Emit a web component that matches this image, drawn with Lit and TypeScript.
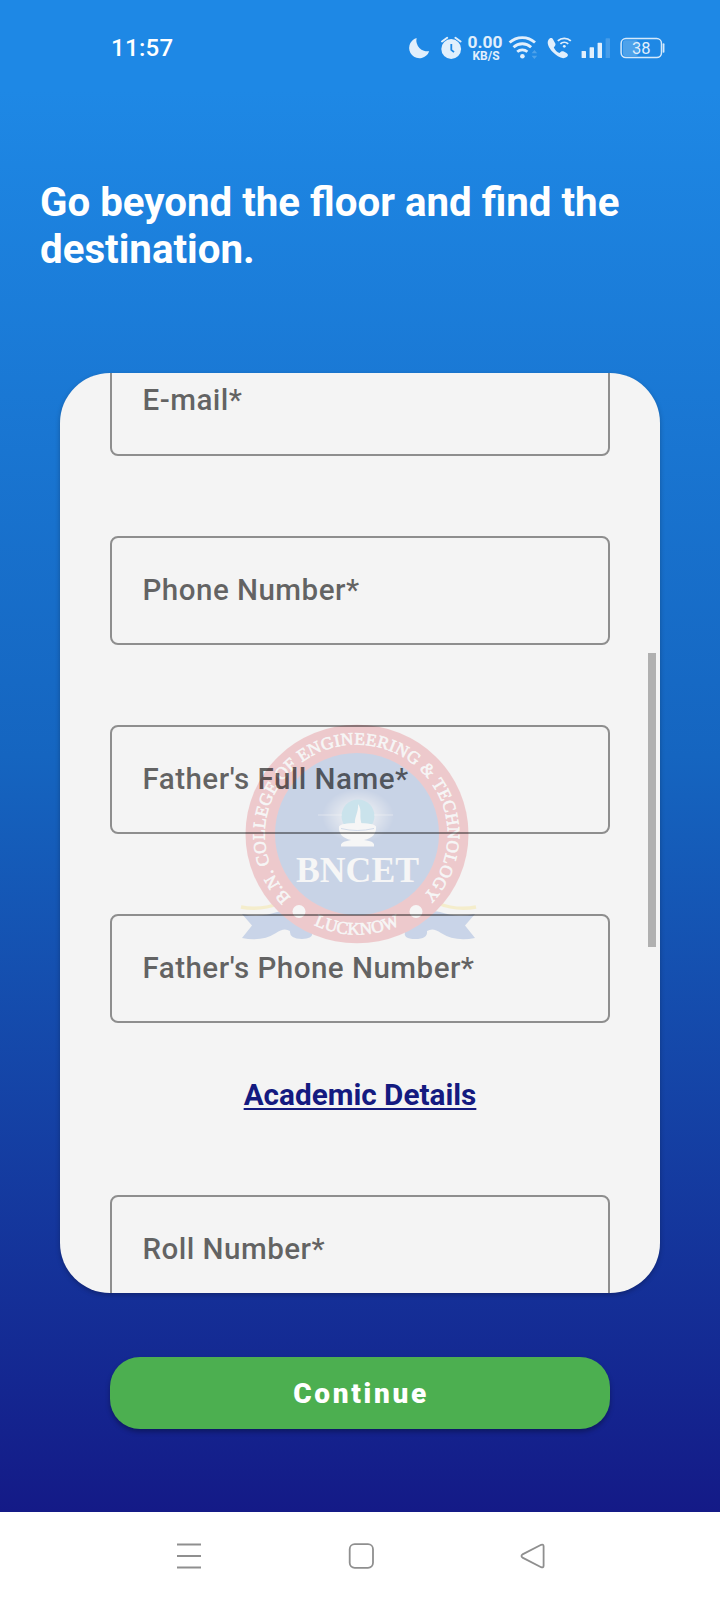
import { LitElement, html, css, svg } from "lit";
import { customElement, property } from "lit/decorators.js";

@customElement("status-bar")
class StatusBar extends LitElement {
  static styles = css`
    :host {
      display: flex;
      height: 96px;
      padding: 0 54px 0 111px;
      box-sizing: border-box;
      align-items: center;
      justify-content: space-between;
      color: #fff;
    }
    .time {
      font: 500 24px Roboto, sans-serif;
      letter-spacing: 0.3px;
    }
    .icons {
      display: block;
      width: 300px;
      height: 60px;
      margin: 4px -24px 0 0;
    }
    .rate { font: 700 16.5px Roboto, sans-serif; }
    .unit { font: 700 12.4px Roboto, sans-serif; }
    .charge { font: 400 16px Roboto, sans-serif; }
  `;
  render() {
    return html`
      <span class="time">11:57</span>
      <svg class="icons" viewBox="0 0 300 60" fill="#e1effc">
        <path d="M26.6 18A10.3 10.3 0 1 0 39.2 31.2A11 11 0 0 1 26.6 18Z" />
        <circle cx="61.2" cy="29" r="9.9" />
        <path d="M52 21.5L57.2 17.8M70.6 21.5L65.4 17.8" stroke="#e1effc" stroke-width="2" stroke-linecap="round" />
        <path d="M61.3 24V29.8L64 32.2" fill="none" stroke="#1e88e5" stroke-width="1.8" />
        <text class="rate" x="77.6" y="28" textLength="35" lengthAdjust="spacingAndGlyphs">0.00</text>
        <text class="unit" x="82.5" y="39.9" textLength="27" lengthAdjust="spacingAndGlyphs">KB/S</text>
        <g fill="none" stroke="#e1effc" stroke-width="2.8">
          <path d="M119.6 22.6a18.5 18.5 0 0 1 25.4 0" />
          <path d="M123.5 27.2a13 13 0 0 1 17.6 0" />
          <path d="M127.2 31.8a7.8 7.8 0 0 1 10.2 0" />
        </g>
        <circle cx="132.4" cy="36.3" r="2.3" />
        <path d="M141.6 33.2l2.8-3.2 2.8 3.2zM141.6 35.8l2.8 3.2 2.8-3.2z" opacity="0.25" />
        <path d="M158.4 20.8c1.5-2.4 3.6-2.5 4.7-0.4l2.2 3.9c0.7 1.5-0.4 2.8-1.5 3.9 1.2 2.6 3.2 4.5 5.8 5.7 1.2-1.6 2.5-2.3 4.2-1.5l2.7 1.4c1.9 1.1 1.9 2.7 0.2 4-3.9 3-9.6-0.3-14-4.9-4-4.3-6.2-9-4.3-12.1z" transform="translate(0 -0.8)" />
        <g fill="none" stroke="#e1effc" stroke-width="1.8">
          <path d="M167.8 20.9a9.4 9.4 0 0 1 13 0" />
          <path d="M170.4 23.9a5.8 5.8 0 0 1 7.8 0" />
        </g>
        <circle cx="174.3" cy="26.3" r="1.4" />
        <rect x="191.6" y="31" width="4.4" height="7" rx="0.6" />
        <rect x="199.6" y="27.3" width="4.4" height="10.7" rx="0.6" />
        <rect x="207.6" y="22.8" width="4.4" height="15.2" rx="0.6" />
        <rect x="215.6" y="18.3" width="4.4" height="19.7" rx="0.6" opacity="0.2" />
        <rect x="233" y="20.3" width="15" height="15.6" rx="2" opacity="0.25" />
        <rect x="231.1" y="18.6" width="40.4" height="19" rx="4.8" fill="none" stroke="#d5e9fb" stroke-width="1.5" />
        <path d="M273.6 24.2v7.6" stroke="#d5e9fb" stroke-width="1.7" stroke-linecap="round" />
        <text class="charge" x="242" y="33.8" textLength="18.5" lengthAdjust="spacingAndGlyphs">38</text>
      </svg>
    `;
  }
}

@customElement("form-field")
class FormField extends LitElement {
  @property() label = "";
  static styles = css`
    :host {
      display: flex;
      flex: none;
      box-sizing: border-box;
      height: 109px;
      border: 2px solid rgba(0, 0, 0, 0.42);
      border-radius: 8px;
      align-items: center;
      padding-left: 30.5px;
      font: 500 29.6px/1 Roboto, sans-serif;
      letter-spacing: 0.45px;
      color: rgba(0, 0, 0, 0.6);
    }
  `;
  render() {
    return html`${this.label}`;
  }
}

@customElement("college-seal")
class CollegeSeal extends LitElement {
  static styles = css`
    :host { display: block; }
    svg { display: block; width: 280px; height: 250px; }
    text { font-family: "Liberation Serif", serif; fill: #fff; }
    .ring { font-size: 17.4px; font-weight: 400; stroke: #fff; stroke-width: 0.6px; }
    .name { font-size: 36px; font-weight: 700; }
  `;
  render() {
    const ribbon = svg`
      <path d="M22 204Q40 208 57 202Q64 200 68 203L92 222Q94 229 82 229Q69 229 70 221Q64 217 56 223Q42 232 22 228L32 215.5Z" fill="#2d62bd" />
      <path d="M21 197Q40 201 60 193" fill="none" stroke="#f7d73c" stroke-width="3.5" />`;
    return html`
      <svg viewBox="0 0 280 250" opacity="0.21">
        <defs>
          <radialGradient id="glow">
            <stop offset="0.3" stop-color="#fff" stop-opacity="0.75" />
            <stop offset="1" stop-color="#fff" stop-opacity="0" />
          </radialGradient>
          <path id="top-arc" d="M70.8 187.5A91.5 90 0 1 1 205 184" />
          <path id="bottom-arc" d="M59.5 188A100.5 100.5 0 0 0 214.5 188" />
        </defs>
        ${ribbon}
        <g transform="translate(277 0) scale(-1 1)">${ribbon}</g>
        <ellipse cx="137" cy="124" rx="111.5" ry="109.3" fill="#d8303c" />
        <ellipse cx="137" cy="124" rx="82" ry="81" fill="#2a5cb4" />
        <ellipse cx="138" cy="106" rx="36" ry="27" fill="url(#glow)" />
        <circle cx="138" cy="106" r="16.5" fill="#35a5cf" />
        <path d="M122 105H98M154 105H173" stroke="#fff" stroke-width="0.7" opacity="0.7" />
        <path d="M135.500 116C133 108 139 103 138 94C143 101 138 106 142.500 116Z" fill="#fff" />
        <path d="M119 116.500Q121 113 137 113Q154 113 156 116.500Q157 127 144 130L149 131Q155 132 154 136.500H121Q120 132 127 131L131 130Q118 127 119 116.500Z" fill="#fff" />
        <path d="M121 118.500Q137 122.500 154 118.500" fill="none" stroke="#2a5cb4" stroke-width="0.8" />
        <text class="name" x="76" y="171.5" textLength="123" lengthAdjust="spacingAndGlyphs">BNCET</text>
        <text class="ring"><textPath href="#top-arc" textLength="422">B.N. COLLEGE OF ENGINEERING &amp; TECHNOLOGY</textPath></text>
        <text class="ring"><textPath href="#bottom-arc" startOffset="50%" text-anchor="middle">LUCKNOW</textPath></text>
        <circle cx="79" cy="201.5" r="6.5" fill="#fff" />
        <circle cx="196" cy="201.5" r="6.5" fill="#fff" />
      </svg>
    `;
  }
}

@customElement("app-root")
class AppRoot extends LitElement {
  static styles = css`
    :host {
      display: flex;
      flex-direction: column;
      width: 720px;
      height: 1600px;
      overflow: hidden;
      font-family: Roboto, sans-serif;
    }
    .screen {
      display: flex;
      flex-direction: column;
      box-sizing: border-box;
      height: 1512px;
      flex: none;
      background: linear-gradient(#1e88e5, #1e88e5 6%, #1565c0 50%, #141a87);
    }
    h1 {
      margin: 83px 40px 0;
      font-size: 40.25px;
      line-height: 47.3px;
      height: 94px;
      font-weight: 700;
      color: #fff;
    }
    .card {
      position: relative;
      flex: none;
      box-sizing: border-box;
      width: 600px;
      height: 920px;
      margin: 100px auto 0;
      border-radius: 50px;
      background: #f4f4f4;
      overflow: hidden;
      display: flex;
      flex-direction: column;
      justify-content: flex-end;
      padding: 0 50px;
      box-shadow: 0 2px 5px rgba(0, 0, 0, 0.25);
    }
    .fields {
      position: relative;
      display: flex;
      flex-direction: column;
      gap: 80.3px;
      margin-bottom: -11px;
    }
    h2 {
      margin: -27px 0 2px;
      text-align: center;
      font-size: 29.7px;
      line-height: 36px;
      font-weight: 700;
      color: #141a80;
      text-decoration: underline;
      text-decoration-thickness: 1.5px;
      text-underline-offset: 3px;
      text-decoration-skip-ink: none;
    }
    college-seal {
      position: absolute;
      left: 160px;
      top: 337px;
    }
    .thumb {
      position: absolute;
      left: 588px;
      top: 280px;
      width: 8px;
      height: 294px;
      background: #b0b0b0;
    }
    button {
      flex: none;
      width: 500px;
      height: 72px;
      margin: 64px auto 0;
      padding: 0 0 0 2px;
      border: 0;
      border-radius: 30px;
      background: #4caf50;
      color: #fff;
      font: 900 28px Roboto, sans-serif;
      letter-spacing: 2.7px;
      box-shadow: 0 3px 5px rgba(0, 0, 0, 0.3);
    }
    nav {
      display: flex;
      flex: 1;
      background: #fff;
      align-items: center;
      justify-content: space-between;
      padding: 0 173px 0 174px;
    }
    nav svg {
      width: 30px;
      height: 30px;
      fill: none;
      stroke: #8f8f8f;
      stroke-width: 1.8;
      stroke-linejoin: round;
    }
  `;
  render() {
    return html`
      <div class="screen">
        <status-bar></status-bar>
        <h1>Go beyond the floor and find the destination.</h1>
        <section class="card">
          <college-seal></college-seal>
          <div class="fields">
            <form-field label="E-mail*"></form-field>
            <form-field label="Phone Number*"></form-field>
            <form-field label="Father's Full Name*"></form-field>
            <form-field label="Father's Phone Number*"></form-field>
            <h2>Academic Details</h2>
            <form-field label="Roll Number*"></form-field>
          </div>
          <div class="thumb"></div>
        </section>
        <button>Continue</button>
      </div>
      <nav>
        <svg viewBox="0 0 30 30"><path d="M3 3.5H27M3 15H27M3 26.5H27" /></svg>
        <svg viewBox="0 0 30 30"><rect x="3.7" y="3.2" width="23.3" height="23.6" rx="5" /></svg>
        <svg viewBox="0 0 30 30"><path d="M24.2 3.800L5.500 13.400Q3.500 15 5.500 16.600L24.200 26.200Q26.500 27 26.600 24.600V5.400Q26.500 3 24.200 3.800Z" /></svg>
      </nav>
    `;
  }
}
